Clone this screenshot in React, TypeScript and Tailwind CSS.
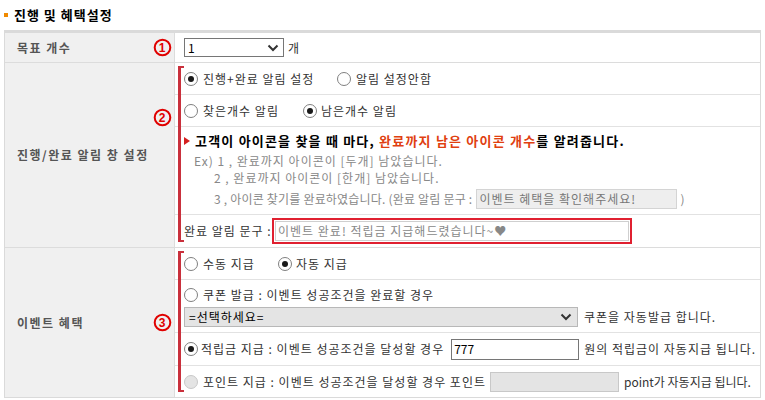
import React from "react";

const FONT = "font-['Noto_Sans_CJK_KR','Noto_Sans',sans-serif]";

function Radio({ checked = false, disabled = false }: { checked?: boolean; disabled?: boolean }) {
  return (
    <span
      className={`inline-flex h-[14px] w-[14px] shrink-0 items-center justify-center rounded-full border ${
        disabled ? "border-[#c8c8c8] bg-[#e4e4e4]" : "border-[#808080] bg-white"
      }`}
    >
      {checked && <span className="h-[6px] w-[6px] rounded-full bg-[#1a1a1a]" />}
    </span>
  );
}

function Num({ n, className = "" }: { n: number; className?: string }) {
  return (
    <svg width="19" height="19" viewBox="0 0 19 19" className={`shrink-0 ${className}`}>
      <circle cx="9.5" cy="9.5" r="7.8" fill="none" stroke="#e00000" strokeWidth="2" />
      <text x="9.5" y="14" textAnchor="middle" fontSize="12" fontWeight="700" fill="#e00000" fontFamily="Liberation Sans, sans-serif">
        {n}
      </text>
    </svg>
  );
}

function Chevron() {
  return (
    <svg width="12" height="8" viewBox="0 0 12 8">
      <path d="M1.5 1.5 L6 6 L10.5 1.5" fill="none" stroke="#333" strokeWidth="2" />
    </svg>
  );
}

function Bracket() {
  return (
    <div className="pointer-events-none absolute bottom-[5px] left-[3px] top-[3px] w-[6px] border-y-2 border-l-[3px] border-[#c9303c]" />
  );
}

function Label({ children, n, numClass = "" }: { children: React.ReactNode; n: number; numClass?: string }) {
  return (
    <div className="flex items-center justify-between border-r border-[#dcdcdc] bg-[#f0f0f0] pl-[12px] pr-[2px]">
      <span className="whitespace-nowrap text-[12px] font-bold tracking-[1.5px] text-[#555]">{children}</span>
      <Num n={n} className={numClass} />
    </div>
  );
}

export default function App() {
  return (
    <div className={`${FONT} h-[400px] w-[765px] whitespace-nowrap bg-white text-[12px] tracking-[1px] text-[#333]`}>
      <div className="flex h-[30px] items-center gap-[6px] pl-[4px] pb-[1px]">
        <span className="h-[4px] w-[4px] bg-[#f08a00]" />
        <span className="text-[13px] font-bold tracking-[1px] text-black">진행 및 혜택설정</span>
      </div>

      <div className="ml-[4px] w-[757px] border-x border-b border-t-[3px] border-[#dadada]">
        {/* 목표 개수 */}
        <div className="grid h-[30px] grid-cols-[170px_1fr] border-b border-[#dcdcdc]">
          <Label n={1}>목표 개수</Label>
          <div className="flex items-center gap-[4px] pl-[9px]">
            <div className="flex h-[19px] w-[100px] items-center justify-between border border-[#767676] bg-white pl-[3px] pr-[4px]">
              <span className="text-[12px] text-black">1</span>
              <Chevron />
            </div>
            <span>개</span>
          </div>
        </div>

        {/* 진행/완료 알림 창 설정 */}
        <div className="grid grid-cols-[170px_1fr] border-b border-[#dcdcdc]">
          <Label n={2} numClass="self-start mt-[45px]">
            진행/완료 알림 창 설정
          </Label>
          <div className="relative">
            <Bracket />
            <div className="flex h-[32px] items-center border-b border-[#e2e2e2] pl-[9px]">
              <Radio checked />
              <span className="ml-[5px] w-[134px]">진행+완료 알림 설정</span>
              <Radio />
              <span className="ml-[5px]">알림 설정안함</span>
            </div>
            <div className="flex h-[32px] items-center border-b border-[#e2e2e2] pl-[9px]">
              <Radio />
              <span className="ml-[5px] w-[100px]">찾은개수 알림</span>
              <Radio checked />
              <span className="ml-[4px]">남은개수 알림</span>
            </div>
            <div className="flex h-[88px] flex-col border-b border-[#e2e2e2] pl-[9px] pt-[4px] text-[#888]">
              <div className="flex h-[20px] items-center">
                <svg width="6" height="8" viewBox="0 0 6 8" className="mr-[5px]">
                  <path d="M0 0 L6 4 L0 8 Z" fill="#d42020" />
                </svg>
                <span className="text-[13px] font-bold tracking-[1.2px] text-black">
                  고객이 아이콘을 찾을 때 마다, <span className="text-[#e04010]">완료까지 남은 아이콘 개수</span>를 알려줍니다.
                </span>
              </div>
              <div className="ml-[10px] mt-[1px] h-[17px]">Ex) 1 , 완료까지 아이콘이 [두개] 남았습니다.</div>
              <div className="ml-[30px] h-[19px]">2 , 완료까지 아이콘이 [한개] 남았습니다.</div>
              <div className="ml-[30px] flex h-[22px] items-center">
                <span className="tracking-[0.2px]">3 , 아이콘 찾기를 완료하였습니다. (완료 알림 문구 :</span>
                <div className="ml-[4px] flex h-[20px] w-[201px] items-center border border-[#d4d4d4] bg-[#eeeeee] pl-[2px] text-[#777]">
                  이벤트 혜택을 확인해주세요!
                </div>
                <span className="ml-[3px]">)</span>
              </div>
            </div>
            <div className="flex h-[32px] items-center pl-[9px]">
              <span className="w-[88px]">완료 알림 문구 :</span>
              <div className="flex h-[26px] w-[360px] items-center border-2 border-[#e02030] p-[1px]">
                <div className="flex h-full w-full items-center border border-[#cfcfcf] pl-[2px] text-[#888]">
                  이벤트 완료! 적립금 지급해드렸습니다~♥
                </div>
              </div>
            </div>
          </div>
        </div>

        {/* 이벤트 혜택 */}
        <div className="grid grid-cols-[170px_1fr]">
          <Label n={3}>이벤트 혜택</Label>
          <div className="relative">
            <Bracket />
            <div className="flex h-[32px] items-center border-b border-[#e2e2e2] pl-[9px]">
              <Radio />
              <span className="ml-[5px] w-[75px]">수동 지급</span>
              <Radio checked />
              <span className="ml-[4px]">자동 지급</span>
            </div>
            <div className="flex h-[53px] flex-col justify-center gap-[3px] border-b border-[#e2e2e2] pl-[9px]">
              <div className="flex items-center">
                <Radio />
                <span className="ml-[5px]">쿠폰 발급 : 이벤트 성공조건을 완료할 경우</span>
              </div>
              <div className="flex items-center">
                <div className="flex h-[20px] w-[394px] items-center justify-between border border-[#b8b8b8] bg-[#e4e4e4] pl-[4px] pr-[5px] text-black">
                  <span>=선택하세요=</span>
                  <Chevron />
                </div>
                <span className="ml-[6px]">쿠폰을 자동발급 합니다.</span>
              </div>
            </div>
            <div className="flex h-[33px] items-center border-b border-[#e2e2e2] pl-[9px]">
              <Radio checked />
              <span className="ml-[3px]">적립금 지급 : 이벤트 성공조건을 달성할 경우</span>
              <div className="ml-[7px] flex h-[21px] w-[128px] items-center border border-[#767676] pl-[2px] tracking-normal text-black">
                777
              </div>
              <span className="ml-[5px]">원의 적립금이 자동지급 됩니다.</span>
            </div>
            <div className="flex h-[31px] items-center pl-[9px]">
              <Radio disabled />
              <span className="ml-[5px]">포인트 지급 : 이벤트 성공조건을 달성할 경우 포인트</span>
              <div className="ml-[4px] h-[20px] w-[129px] shrink-0 border border-[#c8c8c8] bg-[#e4e4e4]" />
              <span className="ml-[5px] tracking-normal">point가 자동지급 됩니다.</span>
            </div>
          </div>
        </div>
      </div>
    </div>
  );
}
